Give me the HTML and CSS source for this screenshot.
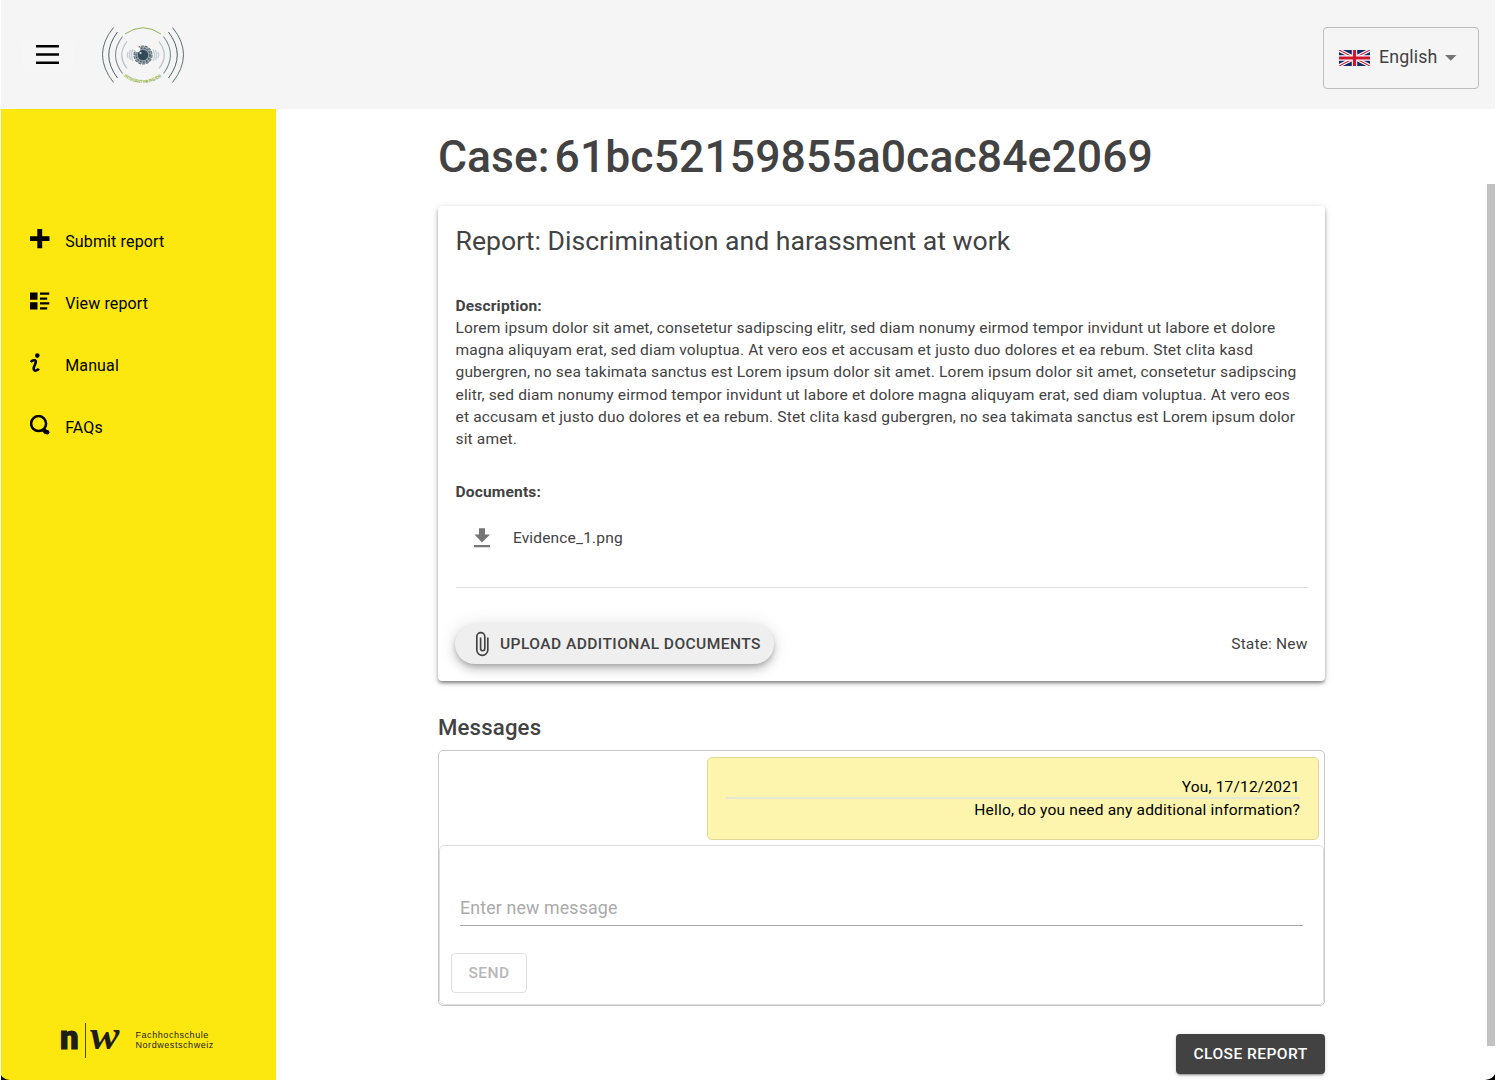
FILE: index.html
```html
<!DOCTYPE html>
<html lang="en">
<head>
<meta charset="utf-8">
<title>Case report</title>
<link rel="stylesheet" href="styles.css">
</head>
<body>
<div class="window">
  <header class="topbar">
    <button class="menu-btn" aria-label="Menu">
      <svg width="24" height="20" viewBox="0 0 24 20"><path d="M0 0h23v2.600H0zM0 8.200h23v2.600H0zM0 16.400h23v2.600H0z"/></svg>
    </button>
    <svg class="eye-logo" width="84" height="60" viewBox="0 0 84 60" fill="none">
      <path d="M12.500 1.500Q-9.500 28.500 12.500 56.500M71.500 1.500Q93.500 28.500 71.500 56.500" stroke="#4c606b" stroke-width=".9"/>
      <path d="M16.500 6Q-1 29 16.500 52M67.500 6Q85 29 67.500 52" stroke="#4c606b" stroke-width="1"/>
      <path d="M21.500 10.500Q7.500 29 21.500 47.500M62.500 10.500Q76.500 29 62.500 47.500" stroke="#7e909b" stroke-width="1.100"/>
      <path d="M26 15.500Q15.500 29 26 42.500M58 15.500Q68.500 29 58 42.500" stroke="#b6c3cc" stroke-width="1.200"/>
      <path d="M24 8Q42-4.500 60 8" stroke="#92b653" stroke-width="1"/>
      <g stroke="#c3cdd4" stroke-width="1.300"><path d="M32 23q-3 6 0 12M29.500 24q-2 5 0 10M27 26q-1.500 3 0 6M52 23q3 6 0 12M54.500 24q2 5 0 10M57 26q1.500 3 0 6"/></g>
      <circle cx="42" cy="29" r="9" fill="#a4afb5" stroke="#61727c" stroke-width="1.200" stroke-dasharray="3 1"/>
      <circle cx="42" cy="29" r="6.900" stroke="#4f626d" stroke-width="1.500" stroke-dasharray="2 1"/>
      <circle cx="42" cy="29" r="5.300" fill="#344a57"/>
      <circle cx="36.500" cy="23.500" r="2.600" fill="#fff"/><circle cx="39.500" cy="27" r="1.100" fill="#dce2e5"/>
      <path id="arc" d="M22.800 50.500Q42 64.500 63 49"/>
      <text class="eye-text"><textPath href="#arc" textLength="41" lengthAdjust="spacingAndGlyphs">INTEGRITY⊕INSIDE</textPath></text>
    </svg>
    <button class="language">
      <svg width="31" height="16" viewBox="0 0 31 16">
        <path fill="#13296b" d="M0 0h31v16H0z"/>
        <path d="M0 0l31 16M31 0L0 16" stroke="#fff" stroke-width="3.400"/>
        <path d="M0 0l15.500 8M31 0L15.500 8M0 16l15.500-8M31 16L15.500 8" stroke="#d0142c" stroke-width="1.100"/>
        <path d="M15.500 0v16M0 8h31" stroke="#fff" stroke-width="5.400"/>
        <path d="M15.500 0v16M0 8h31" stroke="#d0142c" stroke-width="3.200"/>
      </svg>
      <span>English</span>
      <svg class="caret" width="12" height="6" viewBox="0 0 12 6"><path d="M0 0h11.500L5.750 5.800z" fill="#757575"/></svg>
    </button>
  </header>
  <div class="body">
    <nav class="sidebar">
      <ul>
        <li><svg width="20" height="20" viewBox="0 0 20 20"><path d="M7.300 0h4.900v7.200h7.300v4.900h-7.300v7.200H7.300v-7.200H0V7.200h7.300z"/></svg><span>Submit report</span></li>
        <li><svg width="20" height="20" viewBox="0 0 20 20"><path d="M0 1.500h7.500v7.200H0zM0 11.200h7.500v7.200H0zM10 1.500h9.300v2.200H10zM10 6.500h7.200v2.200H10zM10 11.200h9.300v2.200H10zM10 16.200h7.200v2.200H10z"/></svg><span>View report</span></li>
        <li><svg width="20" height="20" viewBox="0 0 20 20"><circle cx="7.300" cy="2.600" r="2.300"/><path d="M.7 9.200C1.700 7.300 5.900 6.300 5.900 8.600 5.900 11 3.300 13.500 3.700 15.900 4.100 18.700 7.600 17.600 8.900 15.800" fill="none" stroke="#000" stroke-width="2.600"/></svg><span>Manual</span></li>
        <li><svg width="20" height="20" viewBox="0 0 20 20"><circle cx="8.600" cy="8.600" r="7.500" fill="none" stroke="#000" stroke-width="2.500"/><path d="M12.800 14l3.800 3.600" stroke="#000" stroke-width="4.400"/><circle cx="17.200" cy="17.200" r="2.200"/></svg><span>FAQs</span></li>
      </ul>
      <div class="school">
        <span class="school-n">n</span><span class="school-bar"></span><span class="school-w">w</span>
        <span class="school-name">Fachhochschule<br>Nordwestschweiz</span>
      </div>
    </nav>
    <main class="content">
      <h1><span>Case:</span><span class="case-id">61bc52159855a0cac84e2069</span></h1>
      <section class="card">
        <h2>Report: Discrimination and harassment at work</h2>
        <h3>Description:</h3>
        <p>Lorem ipsum dolor sit amet, consetetur sadipscing elitr, sed diam nonumy eirmod tempor invidunt ut labore et dolore<br>magna aliquyam erat, sed diam voluptua. At vero eos et accusam et justo duo dolores et ea rebum. Stet clita kasd<br>gubergren, no sea takimata sanctus est Lorem ipsum dolor sit amet. Lorem ipsum dolor sit amet, consetetur sadipscing<br>elitr, sed diam nonumy eirmod tempor invidunt ut labore et dolore magna aliquyam erat, sed diam voluptua. At vero eos<br>et accusam et justo duo dolores et ea rebum. Stet clita kasd gubergren, no sea takimata sanctus est Lorem ipsum dolor<br>sit amet.</p>
        <h3 class="docs-title">Documents:</h3>
        <div class="document">
          <svg width="17" height="20" viewBox="0 0 17 20"><path d="M5 .3h6v6.300h5L8 14.500.5 6.600H5zM0 17h16v2.200H0z" fill="#757575"/></svg>
          <span>Evidence_1.png</span>
        </div>
        <div class="card-actions">
          <button class="upload">
            <svg width="15" height="26" viewBox="0 0 15 26" fill="none" stroke="#424242" stroke-width="1.650"><path d="M12.800 6.500v12.400a5.500 5.500 0 0 1-11 0V5.600a4 4 0 0 1 8 0v12a2.100 2.100 0 0 1-4.200 0V6.500"/></svg>
            <span>UPLOAD ADDITIONAL DOCUMENTS</span>
          </button>
          <span>State: New</span>
        </div>
      </section>
      <h4>Messages</h4>
      <section class="messages">
        <div class="bubble"><span class="author">You, 17/12/2021</span><span>Hello, do you need any additional information?</span></div>
        <form class="composer">
          <div class="field">Enter new message</div>
          <button type="button" class="send">SEND</button>
        </form>
      </section>
      <button class="close">CLOSE REPORT</button>
    </main>
  </div>
  <div class="scroll-thumb"></div>
  <svg class="corner left" width="9" height="5" viewBox="0 0 9 5"><path d="M0 0Q2 4.200 9 5H0z"/></svg>
  <svg class="corner right" width="10" height="6" viewBox="0 0 10 6"><path d="M10 0Q8 5 0 6h10z"/></svg>
</div>
</body>
</html>
```
FILE: styles.css
```css
* { box-sizing: border-box; }
body { margin: 0; background: #fff; color: #424242; font-family: Roboto, sans-serif; }
button { font: inherit; color: inherit; padding: 0; }
h1, h2, h3, h4, p, ul { margin: 0; padding: 0; }
svg { display: block; flex: none; }
.window { position: relative; width: 1496px; height: 1080px; overflow: hidden; padding: 0 1px; display: flex; flex-direction: column; }
.topbar { flex: none; height: 108.5px; background: #f5f5f5; display: flex; align-items: flex-start; padding: 26px 16px 0 21px; }
.menu-btn { width: 52px; height: 32px; margin-top: 13px; padding: 0 0 0 14px; border: 0; border-radius: 5px; background: #f6f6f6; }
.eye-logo { margin-left: 27px; }
.eye-text { font: bold 4.600px "Liberation Sans", sans-serif; fill: #8db33d; }
.language { margin: 1px 0 0 auto; width: 156px; height: 62px; border: 1px solid #bdbdbd; border-radius: 4px; background: none; display: flex; align-items: center; padding-left: 15px; font-size: 17.800px; letter-spacing: .13px; }
.language span { margin: -3px 0 0 9px; }
.caret { margin-left: 7.500px; }
.body { flex: 1; min-height: 0; display: flex; }
.sidebar { width: 275px; flex: none; background: #fce80f; color: #000; display: flex; flex-direction: column; justify-content: space-between; padding: 102px 0 21px 29px; }
.sidebar ul { list-style: none; }
.sidebar li { height: 62px; display: flex; align-items: center; gap: 15.200px; font-size: 16px; letter-spacing: .14px; }
.sidebar li svg { margin-top: -6px; }
.school { height: 38px; display: flex; align-items: center; padding-left: 30px; color: #1d1d1b; }
.school-n { font: 900 33px/34px Roboto, sans-serif; width: 24.500px; margin-top: -5px; -webkit-text-stroke: 1px #1d1d1b; }
.school-bar { width: 1.500px; height: 35px; background: #4b461b; }
.school-w { font: italic bold 39px/34px "Liberation Serif", serif; width: 45px; margin: -9px 0 0 4px; transform: scaleX(1.13); transform-origin: left; }
.school-name { font: 9px/10.500px "Liberation Sans", sans-serif; letter-spacing: .56px; white-space: nowrap; margin-left: .5px; }
.content { width: 887px; margin-left: 162px; display: flex; flex-direction: column; }
h1 { height: 97px; display: flex; gap: 5px; font-size: 44.500px; line-height: 96px; font-weight: 500; white-space: nowrap; }
.case-id { letter-spacing: .08px; }
.card { height: 475.500px; flex: none; border-radius: 4px; box-shadow: 0 3px 3px -2px #0003, 0 3px 4px #00000024, 0 1px 9px #0000001f, 0 2px 3px #0003; padding: 16px 17.500px; font-size: 15.560px; line-height: 22.200px; letter-spacing: .15px; }
h2 { height: 73.200px; font-size: 26.600px; line-height: 37px; font-weight: 400; letter-spacing: 0; }
h3 { font-size: 15.560px; line-height: 22.200px; font-weight: 700; letter-spacing: .167px; }
.card p { white-space: nowrap; letter-spacing: .147px; }
.docs-title { margin-top: 30.800px; }
.document { display: flex; align-items: center; gap: 22.400px; height: 85px; padding: 0 0 15px 18px; border-bottom: 1px solid #dedede; letter-spacing: .147px; }
.card-actions { margin: 35.500px 0 0 -.5px; display: flex; align-items: center; justify-content: space-between; }
.upload { width: 319px; height: 40px; border: 0; border-radius: 20px; background: #efefef; box-shadow: 0 3px 5px -1px #0003, 0 6px 10px #00000024, 0 1px 18px #0000001f; display: flex; align-items: center; gap: 10px; padding-left: 20px; font-size: 15.560px; font-weight: 500; letter-spacing: .434px; white-space: nowrap; }
h4 { height: 69px; flex: none; font-size: 22.200px; line-height: 93.500px; font-weight: 500; letter-spacing: .16px; }
.messages { height: 256px; flex: none; border: 1px solid #c9c9c9; border-radius: 5px; padding-top: 6px; }
.bubble { width: 612px; height: 83px; margin: 0 5px 5px auto; border: 1px solid #dfd995; border-radius: 5px; background: #fdf5ae; color: #000; display: flex; flex-direction: column; padding: 18px 18px 0; text-align: right; font-size: 15.560px; line-height: 23px; letter-spacing: .155px; }
.author { height: 23px; border-bottom: 2px solid #e8e7d5; }
.composer { height: 160px; border: 1px solid #dedede; border-radius: 5px; padding: 44px 20px 0; }
.field { height: 36px; border-bottom: 1px solid #a8a8a8; color: #aaa; font-size: 17.780px; line-height: 37px; letter-spacing: .147px; }
.send { display: block; margin: 27px 0 0 -9px; width: 76px; height: 40px; border: 1px solid #e0e0e0; border-radius: 4px; background: #fff; color: #b8b8b8; font-size: 15.560px; font-weight: 500; letter-spacing: .444px; }
.close { flex: none; align-self: flex-end; margin-top: 27.500px; width: 149px; height: 40px; border: 0; border-radius: 4px; background: #424242; color: #fff; font-size: 15.560px; font-weight: 500; letter-spacing: .444px; box-shadow: 0 3px 1px -2px #0003, 0 2px 2px #00000024, 0 1px 5px #0000001f; }
.scroll-thumb { position: absolute; left: 1487px; top: 184px; width: 8px; height: 862px; background: #c2c2c2; }
.corner { position: absolute; bottom: 0; }
.left { left: 1px; }
.right { right: 1px; }
```
